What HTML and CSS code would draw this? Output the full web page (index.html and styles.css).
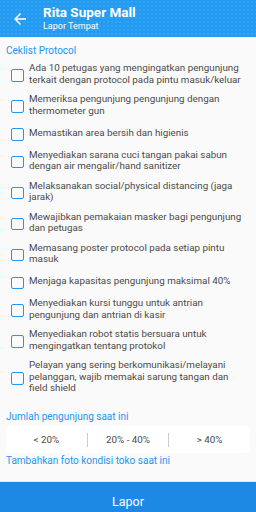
FILE: index.html
```html
<!DOCTYPE html>
<html lang="id">
  <head>
    <meta charset="UTF-8" />
    <meta name="viewport" content="width=device-width, initial-scale=1.0" />
    <title>Lapor Tempat</title>
    <link rel="stylesheet" href="styles.css">
  </head>
  <body>
    <header class="appbar">
      <svg class="back" width="18" height="18" viewBox="0 0 24 24">
        <path d="M20 11H7.83l5.59-5.59L12 4l-8 8 8 8 1.41-1.41L7.83 13H20v-2z" fill="#fff"/>
      </svg>
      <div class="titles">
        <div class="title">Rita Super Mall</div>
        <div class="subtitle">Lapor Tempat</div>
      </div>
    </header>

    <main class="content">
      <div class="label">Ceklist Protocol</div>
      <ul class="checklist">
        <li><span class="box"></span><span class="text">Ada 10 petugas yang mengingatkan pengunjung terkait dengan protocol pada pintu masuk/keluar</span></li>
        <li><span class="box"></span><span class="text">Memeriksa pengunjung pengunjung dengan thermometer gun</span></li>
        <li><span class="box"></span><span class="text">Memastikan area bersih dan higienis</span></li>
        <li><span class="box"></span><span class="text">Menyediakan sarana cuci tangan pakai sabun dengan air mengalir/hand sanitizer</span></li>
        <li><span class="box"></span><span class="text">Melaksanakan social/physical distancing (jaga jarak)</span></li>
        <li><span class="box"></span><span class="text">Mewajibkan pemakaian masker bagi pengunjung dan petugas</span></li>
        <li><span class="box"></span><span class="text">Memasang poster protocol pada setiap pintu masuk</span></li>
        <li><span class="box"></span><span class="text">Menjaga kapasitas pengunjung maksimal 40%</span></li>
        <li><span class="box"></span><span class="text">Menyediakan kursi tunggu untuk antrian pengunjung dan antrian di kasir</span></li>
        <li><span class="box"></span><span class="text">Menyediakan robot statis bersuara untuk mengingatkan tentang protokol</span></li>
        <li><span class="box"></span><span class="text">Pelayan yang sering berkomunikasi/melayani pelanggan, wajib memakai sarung tangan dan field shield</span></li>
      </ul>

      <div class="label visitors">Jumlah pengunjung saat ini</div>
      <div class="segments">
        <span>&lt; 20%</span>
        <span>20% - 40%</span>
        <span>&gt; 40%</span>
      </div>
      <div class="label photo">Tambahkan foto kondisi toko saat ini</div>
    </main>

    <button class="submit">Lapor</button>
  </body>
</html>
```

FILE: styles.css
```css
* {
  box-sizing: border-box;
}
body {
  margin: 0;
  font-family: Roboto, "Noto Sans", sans-serif;
  background-color: #fafafa;
  color: #444;
}
.appbar {
  height: 37px;
  background-color: #239bf0;
  background-image: radial-gradient(circle, rgba(255, 255, 255, 0.08) 1px, transparent 1.3px);
  background-size: 4px 4px;
  background-position: 150px 0;
  display: flex;
  align-items: flex-start;
  color: white;
}
.back {
  margin: 9.5px 14px 0 11px;
}
.titles {
  display: flex;
  flex-direction: column;
  padding-top: 4px;
}
.title {
  font-size: 13.5px;
  font-weight: bold;
  line-height: 16px;
}
.subtitle {
  font-size: 9px;
  line-height: 12px;
}
.content {
  padding: 7px 6px 13.5px;
}
.label {
  font-size: 10px;
  color: #2196f3;
  line-height: 14px;
}
.checklist {
  list-style: none;
  margin: 4px 0 0;
  padding: 0 4px 0 0;
}
.checklist li {
  display: flex;
  align-items: center;
  min-height: 14px;
  margin-bottom: 8px;
}
.box {
  flex-shrink: 0;
  width: 12.5px;
  height: 12.5px;
  margin: 4px 5.5px 0 5px;
  border: 1.6px solid #2196f3;
  border-radius: 2px;
}
.text {
  font-size: 9.8px;
  line-height: 11.5px;
  color: #4a4a4a;
}
.visitors {
  margin-top: 16px;
}
.segments {
  margin-top: 2.5px;
  height: 27px;
  background: white;
  border-radius: 6px;
  display: flex;
  align-items: center;
}
.segments span {
  flex: 1;
  text-align: center;
  font-size: 9.8px;
  color: #4a4a4a;
}
.segments span + span {
  border-left: 1.5px solid #ccc;
  line-height: 14px;
}
.photo {
  margin-top: 0.5px;
}
.submit {
  display: block;
  width: 100%;
  height: 40px;
  border: none;
  border-top: 1px solid #e4e4e4;
  background-color: #1e88e5;
  color: white;
  font-family: Roboto, "Noto Sans", sans-serif;
  font-size: 12.5px;
  padding: 0;
}
```
